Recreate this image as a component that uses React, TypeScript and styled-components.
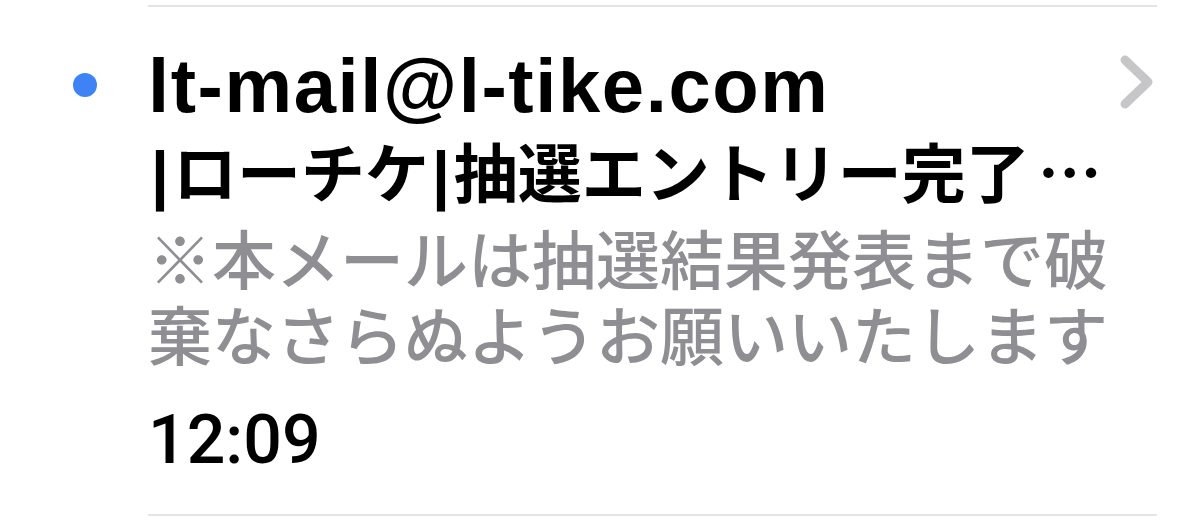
import React from 'react'
import styled, { createGlobalStyle } from 'styled-components'

const GlobalStyle = createGlobalStyle`
  html, body {
    margin: 0;
    padding: 0;
    background: #ffffff;
  }
  body {
    font-family: "Liberation Sans", "Noto Sans CJK JP", sans-serif;
    -webkit-font-smoothing: antialiased;
  }
`

const Page = styled.div`
  width: 1200px;
  height: 528px;
  display: flex;
  background: #ffffff;
  overflow: hidden;
`

const Gutter = styled.div`
  width: 148px;
  flex: none;
  box-sizing: border-box;
  padding: 73px 0 0 73px;
`

const UnreadDot = styled.span`
  display: block;
  width: 24px;
  height: 24px;
  border-radius: 50%;
  background: #3d83f6;
`

const Body = styled.div`
  width: 1009px;
  display: flex;
  flex-direction: column;
`

const Separator = styled.div<{ $top: number }>`
  height: 2px;
  background: #e4e4e6;
  margin-top: ${(p) => p.$top}px;
`

const Header = styled.div`
  margin-top: 35px;
  height: 90px;
  display: flex;
  align-items: flex-start;
  justify-content: space-between;
`

const Sender = styled.div`
  font-family: "Liberation Sans", "Noto Sans", sans-serif;
  font-weight: 700;
  font-size: 76px;
  line-height: 88px;
  letter-spacing: 1.6px;
  color: #000000;
  white-space: nowrap;
`

const Chevron = styled.svg`
  width: 40px;
  height: 56px;
  margin-top: 12px;
  margin-right: 1px;
  flex: none;
`

const Subject = styled.div`
  font-family: "Liberation Sans", "Noto Sans CJK JP", sans-serif;
  font-weight: 700;
  font-size: 64px;
  line-height: 86px;
  height: 86px;
  color: #000000;
  white-space: nowrap;
`

const Pipe = styled.span`
  margin: 0 4px 0 3px;
`

const Ellipsis = styled.span`
  font-family: "Noto Sans CJK JP", sans-serif;
  line-height: 0;
  margin-left: 8px;
`

const Preview = styled.div`
  font-family: "Noto Sans CJK JP", sans-serif;
  font-weight: 500;
  font-size: 64px;
  line-height: 76px;
  color: #8e8e93;
`

const Time = styled.div`
  margin-top: 20px;
  font-family: Roboto, "Liberation Sans", sans-serif;
  font-weight: 500;
  font-size: 68px;
  line-height: 100px;
  color: #000000;
`

export default function App() {
  return (
    <Page>
      <GlobalStyle />
      <Gutter>
        <UnreadDot />
      </Gutter>
      <Body>
        <Separator $top={5} />
        <Header>
          <Sender>lt-mail@l-tike.com</Sender>
          <Chevron viewBox="0 0 40 56">
            <polyline
              points="9,6 32,28 9,50"
              fill="none"
              stroke="#c6c6c8"
              strokeWidth="9"
              strokeLinecap="round"
              strokeLinejoin="round"
            />
          </Chevron>
        </Header>
        <Subject>
          <Pipe>|</Pipe>ローチケ<Pipe>|</Pipe>抽選エントリー完了<Ellipsis>…</Ellipsis>
        </Subject>
        <Preview>※本メールは抽選結果発表まで破棄なさらぬようお願いいたします</Preview>
        <Time>12:09</Time>
        <Separator $top={24} />
      </Body>
    </Page>
  )
}
